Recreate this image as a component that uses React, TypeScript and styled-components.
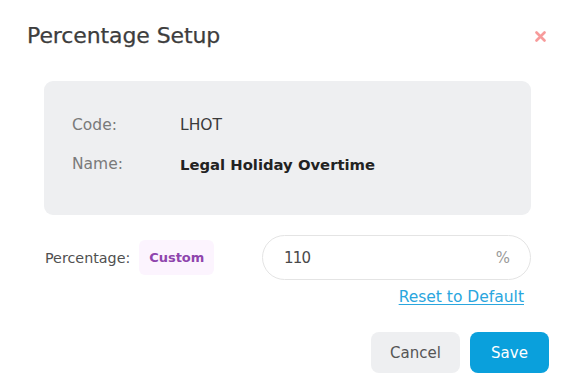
import React from "react";
import styled, { createGlobalStyle } from "styled-components";

const GlobalStyle = createGlobalStyle`
  html, body { margin: 0; padding: 0; background: #ffffff; }
  body { font-family: "DejaVu Sans", "Noto Sans", sans-serif; }
  * { box-sizing: border-box; }
`;

const Modal = styled.div`
  width: 576px;
  height: 386px;
  background: #ffffff;
  display: flex;
  flex-direction: column;
`;

const Header = styled.div`
  display: flex;
  align-items: center;
  justify-content: space-between;
  padding: 24px 30px 0 27px;
  height: 48px;
`;

const Title = styled.h2`
  margin: 0;
  font-size: 22px;
  line-height: 24px;
  font-weight: 500;
  color: #3d3d3d;
  letter-spacing: -0.1px;
  -webkit-text-stroke: 0.25px #3d3d3d;
`;

const CloseButton = styled.button`
  border: none;
  background: transparent;
  padding: 0;
  width: 12px;
  height: 12px;
  display: flex;
  align-items: center;
  justify-content: center;
  cursor: pointer;
`;

const Body = styled.div`
  padding: 33px 45px 0 44px;
  display: flex;
  flex-direction: column;
`;

const InfoBox = styled.div`
  background: #eeeff1;
  border-radius: 9px;
  padding: 34px 28px 41px;
  display: flex;
  flex-direction: column;
  gap: 19px;
`;

const InfoRow = styled.div`
  display: flex;
  align-items: center;
  height: 20px;
`;

const InfoLabel = styled.span`
  width: 108px;
  font-size: 15.5px;
  color: #7a7a7a;
`;

const InfoValue = styled.span<{ $bold?: boolean }>`
  font-size: ${(p) => (p.$bold ? "14.8px" : "15.5px")};
  color: ${(p) => (p.$bold ? "#222222" : "#3a3a3a")};
  font-weight: ${(p) => (p.$bold ? 700 : 400)};
`;

const PercentRow = styled.div`
  margin-top: 20px;
  display: flex;
  align-items: center;
  height: 45px;
`;

const PercentLabel = styled.span`
  font-size: 14.3px;
  color: #505050;
  margin-left: 1px;
`;

const Badge = styled.span`
  margin-left: 9px;
  height: 35px;
  width: 75px;
  border-radius: 6px;
  background: #fcf4fe;
  color: #8f45ad;
  font-size: 13px;
  font-weight: 700;
  display: flex;
  align-items: center;
  justify-content: center;
`;

const InputWrap = styled.div`
  margin-left: auto;
  width: 269px;
  height: 45px;
  border: 1px solid #e4e4e4;
  border-radius: 23px;
  display: flex;
  align-items: center;
  padding: 0 20px 0 21px;
`;

const Input = styled.input`
  flex: 1;
  border: none;
  outline: none;
  background: transparent;
  font-family: inherit;
  font-size: 15px;
  letter-spacing: -0.8px;
  color: #4a4a4a;
  padding: 0;
  min-width: 0;
`;

const Suffix = styled.span`
  font-size: 15px;
  color: #9a9a9a;
`;

const LinkRow = styled.div`
  display: flex;
  justify-content: flex-end;
  padding-right: 7px;
  margin-top: 8px;
  height: 18px;
  align-items: center;
`;

const ResetLink = styled.a`
  font-size: 15.5px;
  color: #2aa6de;
  text-decoration: underline;
  text-underline-offset: 2px;
  cursor: pointer;
`;

const Footer = styled.div`
  display: flex;
  justify-content: flex-end;
  gap: 10px;
  padding: 0 27px 0 0;
  margin-top: 26px;
`;

const Button = styled.button<{ $primary?: boolean }>`
  height: 41px;
  width: ${(p) => (p.$primary ? "79px" : "89px")};
  border: none;
  border-radius: 8px;
  font-family: inherit;
  font-size: 15px;
  background: ${(p) => (p.$primary ? "#0aa0dc" : "#eeeff1")};
  color: ${(p) => (p.$primary ? "#ffffff" : "#555555")};
  cursor: pointer;
`;

export default function App() {
  return (
    <>
      <GlobalStyle />
      <Modal>
        <Header>
          <Title>Percentage Setup</Title>
          <CloseButton aria-label="Close">
            <svg width="11" height="11" viewBox="0 0 11 11">
              <path d="M1.5 1.5 L9.5 9.5 M9.5 1.5 L1.5 9.5" stroke="#f79b9b" strokeWidth="2.6" strokeLinecap="round" />
            </svg>
          </CloseButton>
        </Header>
        <Body>
          <InfoBox>
            <InfoRow>
              <InfoLabel>Code:</InfoLabel>
              <InfoValue>LHOT</InfoValue>
            </InfoRow>
            <InfoRow>
              <InfoLabel>Name:</InfoLabel>
              <InfoValue $bold>Legal Holiday Overtime</InfoValue>
            </InfoRow>
          </InfoBox>
          <PercentRow>
            <PercentLabel>Percentage:</PercentLabel>
            <Badge>Custom</Badge>
            <InputWrap>
              <Input defaultValue="110" />
              <Suffix>%</Suffix>
            </InputWrap>
          </PercentRow>
          <LinkRow>
            <ResetLink>Reset to Default</ResetLink>
          </LinkRow>
        </Body>
        <Footer>
          <Button>Cancel</Button>
          <Button $primary>Save</Button>
        </Footer>
      </Modal>
    </>
  );
}
